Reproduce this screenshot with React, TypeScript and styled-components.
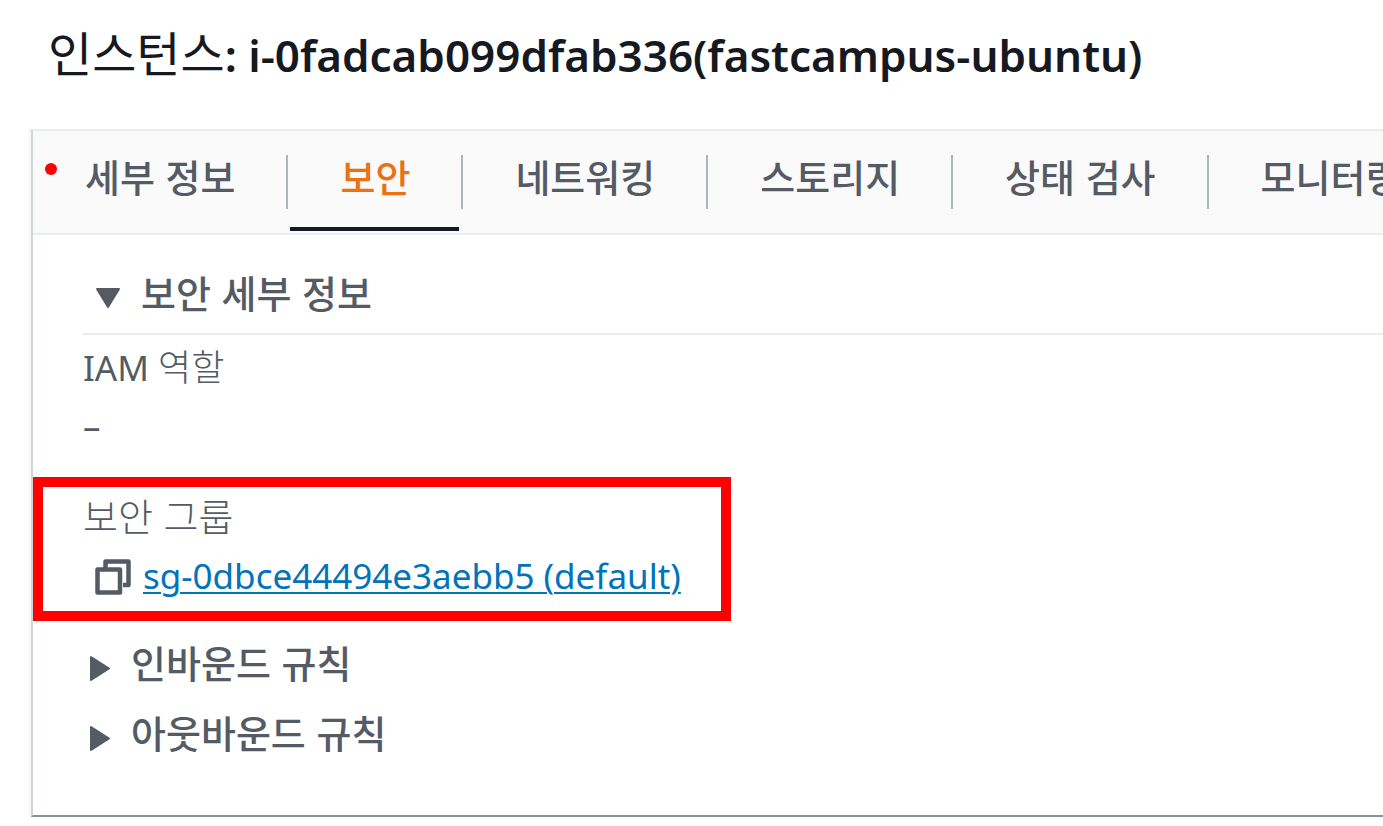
import React, { useState } from "react";
import styled, { createGlobalStyle } from "styled-components";

const GlobalStyle = createGlobalStyle`
  * { box-sizing: border-box; }
  body {
    margin: 0;
    background: #ffffff;
    color: #545b64;
    font-family: "Noto Sans", "Noto Sans CJK KR", sans-serif;
    font-size: 35px;
    overflow-x: hidden;
  }
  button { font-family: inherit; color: inherit; }
`;

const Page = styled.main`
  padding-left: 31px;
`;

const Title = styled.h1`
  margin: 0;
  padding: 23px 17px 42px;
  color: #16191f;
  font-size: 44px;
  font-weight: 600;
  line-height: 64px;
  white-space: nowrap;
`;

const TitleLabel = styled.span`
  font-family: "Noto Sans CJK KR", sans-serif;
  font-size: 48px;
  font-weight: 400;
  line-height: 1;
`;

const Panel = styled.section`
  position: relative;
  border-top: 2px solid #eaeded;
  border-left: 2px solid #d0d5d5;
  border-bottom: 2px solid #879596;
  box-shadow: 0 2px 0 #d0d5d5, -2px 0 0 #f6f7f7;
`;

const Marker = styled.span`
  position: absolute;
  top: 32px;
  left: 12px;
  width: 12px;
  height: 12px;
  border-radius: 50%;
  background: #ff0000;
`;

const TabBar = styled.div`
  display: flex;
  height: 104px;
  overflow: hidden;
  background: #fafafa;
  border-bottom: 2px solid #eaeded;
`;

const TabItem = styled.div`
  position: relative;
  flex: none;
  display: flex;
  padding: 0 2px 2px;
  margin-right: -2px;

  &:first-child { padding-left: 0; }

  &:not(:last-child)::after {
    content: "";
    position: absolute;
    top: 24px;
    right: 0;
    width: 2px;
    height: 54px;
    background: #aab7b8;
  }
`;

const TabButton = styled.button<{ $active: boolean }>`
  margin: 0 2px;
  padding: 0 49px 6px 50px;
  border: 0;
  border-bottom: 4px solid ${(p) => (p.$active ? "#16191f" : "transparent")};
  background: none;
  color: ${(p) => (p.$active ? "#ec7211" : "#545b64")};
  font-family: "Noto Sans CJK KR", sans-serif;
  font-size: 38px;
  font-weight: 500;
  line-height: 56px;
  white-space: nowrap;
  cursor: pointer;
`;

const Content = styled.div`
  padding: 24px 0 46px;
`;

const SectionHeader = styled.h2`
  margin: 0 0 4px 50px;
  padding: 0 0 4px 12px;
  border-bottom: 2px solid #eaeded;
  font-size: 38px;
`;

const RuleHeader = styled.h2`
  margin: 0;
  padding-left: 56px;
  font-size: 38px;
`;

const Disclosure = styled.button`
  display: flex;
  align-items: center;
  gap: 20px;
  height: 70px;
  padding: 0 0 4px;
  border: 0;
  background: none;
  font-family: "Noto Sans CJK KR", sans-serif;
  font-size: 38px;
  font-weight: 500;
  line-height: 56px;
  cursor: pointer;

  svg { flex: none; margin-top: 13px; }
`;

const Fields = styled.dl`
  margin: 0 0 8px;
`;

const Field = styled.div`
  padding: 0 50px 22px;
  line-height: 58px;
`;

const HighlightedField = styled(Field)`
  width: fit-content;
  padding: 2px 40px 6px;
  border: 10px solid #ff0000;
`;

const FieldLabel = styled.dt``;

const Hangul = styled.span<{ $size: number }>`
  font-family: "Noto Sans CJK KR", sans-serif;
  font-size: ${(p) => p.$size}px;
  font-weight: 300;
  line-height: 1;
`;

const FieldValue = styled.dd`
  display: flex;
  align-items: center;
  margin: 0;
`;

const CopyButton = styled.button`
  display: flex;
  margin: 2px 12px 0 12px;
  padding: 0;
  border: 0;
  background: none;
  cursor: pointer;
`;

const GroupLink = styled.a`
  color: #0073bb;
  text-decoration: underline;
  text-decoration-thickness: 2px;
  text-underline-offset: 3px;
`;

const tabs = ["세부 정보", "보안", "네트워킹", "스토리지", "상태 검사", "모니터링"];

function Caret({ open }: { open: boolean }) {
  return open ? (
    <svg width="26" height="21" viewBox="0 0 26 21" aria-hidden="true">
      <path d="M2 1H24L13 19Z" fill="#545b64" stroke="#545b64" strokeWidth="2" strokeLinejoin="round" />
    </svg>
  ) : (
    <svg width="22" height="27" viewBox="0 0 22 27" aria-hidden="true">
      <path d="M2 2V25L20 13.500Z" fill="#545b64" stroke="#545b64" strokeWidth="2" strokeLinejoin="round" />
    </svg>
  );
}

function CopyIcon() {
  return (
    <svg width="36" height="36" viewBox="0 0 36 36" fill="none" stroke="#545b64" strokeWidth="4.500" aria-hidden="true">
      <path d="M10.500 9V2.500H33.500V26H28" strokeLinejoin="round" />
      <path d="M2.500 10.500H25V33.500H2.500Z" strokeLinejoin="round" />
    </svg>
  );
}

export default function App() {
  const [active, setActive] = useState("보안");
  const [open, setOpen] = useState({ details: true, inbound: false, outbound: false });
  const toggle = (key: keyof typeof open) => setOpen({ ...open, [key]: !open[key] });

  return (
    <Page lang="ko">
      <GlobalStyle />
      <Title>
        <TitleLabel>인스턴스</TitleLabel>: i-0fadcab099dfab336(fastcampus-ubuntu)
      </Title>
      <Panel>
        <TabBar role="tablist">
          {tabs.map((tab) => (
            <TabItem key={tab} role="presentation">
              <TabButton
                type="button"
                role="tab"
                aria-selected={tab === active}
                $active={tab === active}
                onClick={() => setActive(tab)}
              >
                {tab}
              </TabButton>
            </TabItem>
          ))}
        </TabBar>
        <Marker />
        <Content role="tabpanel">
          <SectionHeader>
            <Disclosure type="button" aria-expanded={open.details} onClick={() => toggle("details")}>
              <Caret open={open.details} />
              보안 세부 정보
            </Disclosure>
          </SectionHeader>
          {open.details && (
            <Fields>
              <Field>
                <FieldLabel>
                  IAM <Hangul $size={36}>역할</Hangul>
                </FieldLabel>
                <FieldValue>–</FieldValue>
              </Field>
              <HighlightedField>
                <FieldLabel>
                  <Hangul $size={38}>보안 그룹</Hangul>
                </FieldLabel>
                <FieldValue>
                  <CopyButton type="button" aria-label="복사">
                    <CopyIcon />
                  </CopyButton>
                  <GroupLink href="#sg-0dbce44494e3aebb5">sg-0dbce44494e3aebb5 (default)</GroupLink>
                </FieldValue>
              </HighlightedField>
            </Fields>
          )}
          <RuleHeader>
            <Disclosure type="button" aria-expanded={open.inbound} onClick={() => toggle("inbound")}>
              <Caret open={open.inbound} />
              인바운드 규칙
            </Disclosure>
          </RuleHeader>
          <RuleHeader>
            <Disclosure type="button" aria-expanded={open.outbound} onClick={() => toggle("outbound")}>
              <Caret open={open.outbound} />
              아웃바운드 규칙
            </Disclosure>
          </RuleHeader>
        </Content>
      </Panel>
    </Page>
  );
}
